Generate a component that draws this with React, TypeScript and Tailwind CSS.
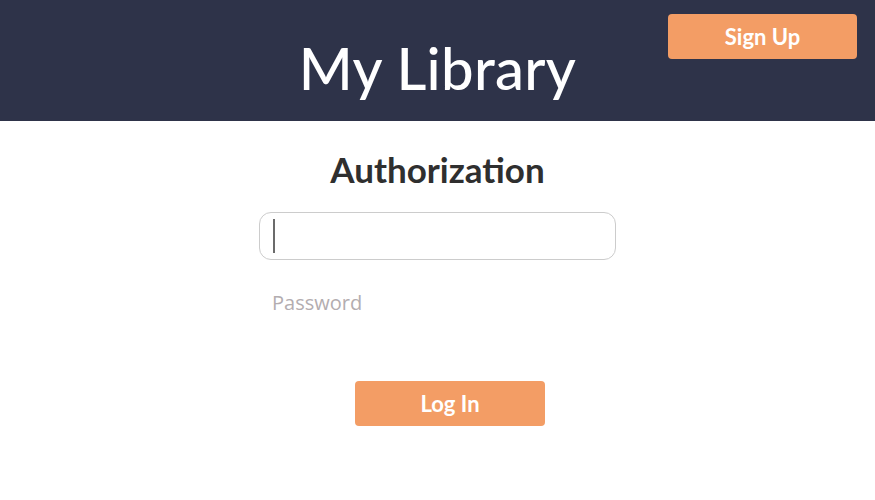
export default function App() {
  return (
    <div className="min-h-screen bg-white font-['Lato',sans-serif]">
      <header className="relative flex h-[121px] items-center justify-center bg-[#2e3349]">
        <h1 className="pt-[14px] text-[58px] font-medium leading-none tracking-[0.3px] text-white">My Library</h1>
        <button className="absolute right-[18px] top-[14px] h-[45px] w-[189px] rounded-[4px] bg-[#f39d65] text-[22px] font-bold text-white">
          Sign Up
        </button>
      </header>

      <main className="flex flex-col items-center">
        <h2 className="mt-[26px] text-[35px] font-bold leading-[44px] text-[#2f2f2f]">Authorization</h2>
        <form className="mt-[21px] flex w-[357px] flex-col" onSubmit={(e) => e.preventDefault()}>
          <div className="relative">
            <input
              type="text"
              className="h-[48px] w-full rounded-[12px] border border-[#cccccc] px-[13px] text-[20px] text-[#333] outline-none font-['Open_Sans',sans-serif]"
            />
            <span className="pointer-events-none absolute left-[14px] top-[7px] h-[34px] w-[2px] bg-[#6b6b6b]" />
          </div>
          <input
            type="password"
            placeholder="Password"
            className="mt-[22px] h-[40px] w-full px-[13px] text-[20px] text-[#333] outline-none placeholder:text-[#b3adb0] font-['Open_Sans',sans-serif]"
          />
          <button className="ml-[96px] mt-[59px] h-[45px] w-[190px] rounded-[4px] bg-[#f39d65] text-[22px] font-bold text-white">
            Log In
          </button>
        </form>
      </main>
    </div>
  );
}
